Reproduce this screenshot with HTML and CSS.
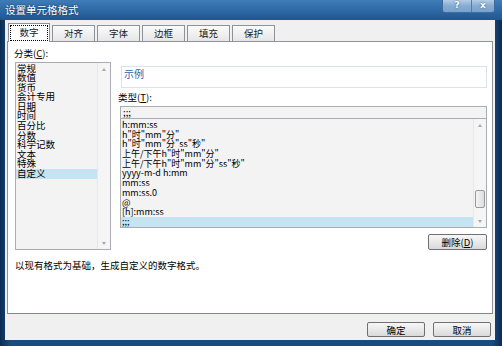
FILE: index.html
```html
<!DOCTYPE html>
<html lang="zh-CN">
<head>
  <meta charset="UTF-8" />
  <title>设置单元格格式</title>
  <link rel="stylesheet" href="styles.css">
</head>
<body>
  <div class="window">
    <div class="titlebar">
      <span class="title">设置单元格格式</span>
      <div class="caption-btns">
        <span class="cap-btn help">?</span>
        <span class="cap-btn close">x</span>
      </div>
    </div>

    <div class="frame">
      <div class="client">
        <!-- Tabs -->
        <div class="tabs">
          <span class="tab active"><span class="focus">数字</span></span>
          <span class="tab">对齐</span>
          <span class="tab">字体</span>
          <span class="tab">边框</span>
          <span class="tab">填充</span>
          <span class="tab">保护</span>
        </div>

        <div class="panel">
          <div class="panel-main">
            <div class="left">
              <div class="label">分类(<u>C</u>):</div>
              <div class="listbox cat-list">
                <ul class="items">
                  <li>常规</li>
                  <li>数值</li>
                  <li>货币</li>
                  <li>会计专用</li>
                  <li>日期</li>
                  <li>时间</li>
                  <li>百分比</li>
                  <li>分数</li>
                  <li>科学记数</li>
                  <li>文本</li>
                  <li>特殊</li>
                  <li class="selected">自定义</li>
                </ul>
                <div class="scrollbar">
                  <span class="arrow up"></span>
                  <span class="track"></span>
                  <span class="arrow down"></span>
                </div>
              </div>
            </div>

            <div class="right">
              <div class="sample">
                <span class="sample-title">示例</span>
              </div>
              <div class="label type-label">类型(<u>T</u>):</div>
              <div class="type-input">;;;</div>
              <div class="listbox fmt-list">
                <ul class="items">
                  <li>h:mm:ss</li>
                  <li>h"时"mm"分"</li>
                  <li>h"时"mm"分"ss"秒"</li>
                  <li>上午/下午h"时"mm"分"</li>
                  <li>上午/下午h"时"mm"分"ss"秒"</li>
                  <li>yyyy-m-d h:mm</li>
                  <li>mm:ss</li>
                  <li>mm:ss.0</li>
                  <li>@</li>
                  <li>[h]:mm:ss</li>
                  <li class="selected">;;;</li>
                </ul>
                <div class="scrollbar">
                  <span class="arrow up"></span>
                  <span class="track"></span>
                  <span class="thumb"></span>
                  <span class="track small"></span>
                  <span class="arrow down"></span>
                </div>
              </div>
              <button class="btn delete-btn">删除(<u>D</u>)</button>
            </div>
          </div>
          <p class="desc">以现有格式为基础，生成自定义的数字格式。</p>
        </div>

        <div class="footer">
          <button class="btn">确定</button>
          <button class="btn">取消</button>
        </div>
      </div>
    </div>
  </div>
</body>
</html>
```

FILE: styles.css
```css
/* Basic page styling */
body {
  margin: 0;
  padding: 0;
  font-family: "Noto Sans CJK SC", sans-serif;
  font-size: 9.5px;
  color: #000;
  overflow: hidden;
}
ul {
  margin: 0;
  padding: 0;
  list-style: none;
}
u {
  text-decoration: underline;
}

.window {
  width: 502px;
  height: 346px;
  display: flex;
  flex-direction: column;
  background: #123e6e;
}

/* Title bar */
.titlebar {
  height: 20px;
  display: flex;
  align-items: flex-start;
  padding-left: 5px;
  background: linear-gradient(#3f7cb8, #2c68a3 55%, #1f5690);
}
.title {
  color: #fff;
  font-size: 10.5px;
  line-height: 19px;
  text-shadow: 0 0 2px #0b2645;
}
.caption-btns {
  margin-left: auto;
  margin-right: 7px;
  display: flex;
  border: 1px solid #3f6c9c;
  border-top: 0;
  border-radius: 0 0 3px 3px;
  overflow: hidden;
}
.cap-btn {
  height: 12px;
  line-height: 11px;
  text-align: center;
  color: #fff;
  font-family: "DejaVu Sans", sans-serif;
  font-weight: bold;
  font-size: 9px;
  background: linear-gradient(#b4cde6, #86abd1 50%, #7aa2cb);
  text-shadow: 0 0 2px #2d5a88;
}
.help {
  width: 28px;
  border-right: 1px solid #4f7eae;
}
.close {
  width: 22px;
}

/* Frame + client area */
.frame {
  flex: 1;
  padding: 0 7px 6px 5px;
  display: flex;
  background: linear-gradient(to right, #0b2c52, #1b4a7e 2%, #1b4a7e 98%, #0b2c52);
}
.client {
  flex: 1;
  background: #f0f0f0;
  padding-top: 3px;
  display: flex;
  flex-direction: column;
}

/* Tabs */
.tabs {
  height: 18px;
  display: flex;
  align-items: flex-end;
  gap: 2px;
  padding-left: 3px;
}
.tab {
  width: 41px;
  height: 15px;
  line-height: 15px;
  text-align: center;
  color: #222;
  border: 1px solid #8f9296;
  border-bottom: 0;
  background: linear-gradient(#fbfbfb, #e6e6e6);
}
.tab.active {
  background: #fff;
  position: relative;
  top: 1px;
  padding: 1px;
  box-sizing: border-box;
  width: 42px;
  height: 19px;
  line-height: 13px;
}
.focus {
  display: block;
  height: 14px;
  border: 1px dotted #000;
}

/* Tab panel */
.panel {
  height: 273px;
  margin: 0 2px;
  box-sizing: border-box;
  background: #fff;
  border: 1px solid #8f9296;
  border-bottom-color: #b466bf;
  padding: 6px 5px 0 6px;
  display: flex;
  flex-direction: column;
}
.panel-main {
  display: flex;
}
.left {
  width: 97px;
}
.label {
  height: 14px;
  line-height: 11px;
}
.listbox {
  display: flex;
  border: 1px solid #a9adb3;
  background: #f3f3f3;
  box-sizing: border-box;
}
.cat-list {
  margin-left: 1px;
  height: 188px;
}
.items {
  flex: 1;
  padding-top: 0.5px;
}
.items li {
  line-height: 9.6px;
  height: 9.6px;
  padding-left: 1px;
  white-space: nowrap;
}
.items li.selected {
  background: #c6e3f2;
}

/* Scrollbars */
.scrollbar {
  width: 12px;
  display: flex;
  flex-direction: column;
  background: #f5f5f5;
  border-left: 1px solid #e8e8e8;
}
.arrow {
  height: 12px;
  display: flex;
  align-items: center;
  justify-content: center;
}
.arrow::after {
  content: "";
  border-left: 2.5px solid transparent;
  border-right: 2.5px solid transparent;
}
.arrow.up::after {
  border-bottom: 3px solid #a8a8a8;
}
.arrow.down::after {
  border-top: 3px solid #a8a8a8;
}
.track {
  flex: 1;
}
.track.small {
  flex: 0 0 7px;
}
.thumb {
  height: 16px;
  margin: 0 1px;
  border: 1px solid #9a9a9a;
  border-radius: 2px;
  background: linear-gradient(to right, #f4f4f4, #dedede);
}

/* Right column */
.right {
  width: 367px;
  margin-left: 9px;
  display: flex;
  flex-direction: column;
}
.sample {
  margin: 18px 0 0 1px;
  height: 22px;
  box-sizing: border-box;
  border: 1px solid #dbe2e8;
}
.sample-title {
  display: inline-block;
  margin: -6px 0 0 1px;
  padding: 0 1px;
  line-height: 11px;
  font-size: 10px;
  color: #2e64a8;
  background: #fff;
}
.type-label {
  margin: 3px 0 0 -2px;
  height: 12px;
  line-height: 12px;
}
.type-input {
  margin-top: 3px;
  height: 12px;
  box-sizing: border-box;
  border: 1px solid #a9adb3;
  border-bottom: 0;
  background: #f3f3f3;
  line-height: 10px;
  padding-left: 2px;
}
.fmt-list {
  height: 110px;
}
.fmt-list .items {
  padding-top: 1px;
}
.fmt-list .items li {
  line-height: 9.7px;
  height: 9.7px;
  font-size: 9px;
}

/* Buttons */
.btn {
  font-family: inherit;
  font-size: 9.5px;
  height: 16px;
  padding: 0;
  border: 1px solid #707070;
  border-radius: 2px;
  background: linear-gradient(#f6f6f6, #e9e9e9 50%, #d9d9d9);
  color: #000;
}
.delete-btn {
  align-self: flex-end;
  width: 59px;
  margin-top: 6px;
}
.desc {
  margin: 9px 0 0 1px;
  line-height: 12px;
}
.footer {
  display: flex;
  justify-content: flex-end;
  gap: 8px;
  margin-top: 8px;
  padding-right: 4px;
}
.footer .btn {
  width: 58px;
  height: 15px;
}
```
